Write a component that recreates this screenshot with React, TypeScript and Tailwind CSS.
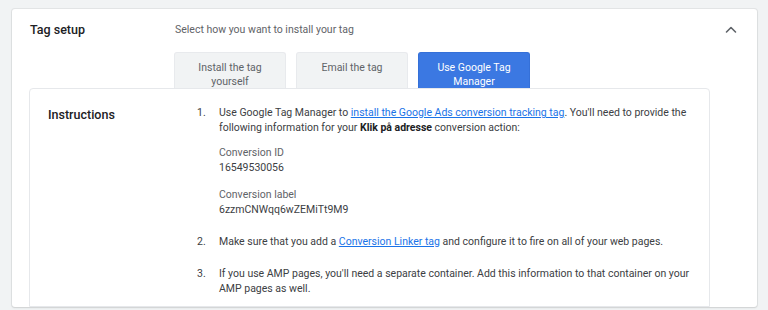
import React from 'react';

const font = { fontFamily: 'Roboto, "Noto Sans", Arial, sans-serif' };

const TABS = [
  { label: 'Install the tag yourself', active: false },
  { label: 'Email the tag', active: false },
  { label: 'Use Google Tag Manager', active: true },
];

const ChevronUp = () => (
  <svg className="w-[14px] h-[14px]" viewBox="0 0 14 14" fill="none" stroke="#5f6368" strokeWidth="1.6" strokeLinecap="round" strokeLinejoin="round">
    <path d="M2.5 9L7 4.5L11.5 9" />
  </svg>
);

const Step: React.FC<{ n: number; className?: string; children: React.ReactNode }> = ({ n, className = '', children }) => (
  <li className={`flex ${className}`}>
    <span className="w-[22px] shrink-0">{n}.</span>
    <div className="flex-1">{children}</div>
  </li>
);

export default function App() {
  return (
    <div className="w-[768px] h-[310px] bg-[#f1f3f4] pt-[9px] pl-[12px] pr-[11px] overflow-hidden" style={font}>
      <div className="bg-white h-[298px] rounded-[3px] shadow-[0_0_0_1px_rgba(60,64,67,0.08),0_1px_2px_rgba(60,64,67,0.12)] flex flex-col">
        {/* header */}
        <div className="flex items-center pt-[11px] pl-[18px] pr-[19px] h-[31px]">
          <div className="w-[145px] text-[12.5px] font-medium text-[#202124] leading-[20px]">Tag setup</div>
          <div className="flex-1 text-[10.5px] text-[#5f6368] leading-[20px]">Select how you want to install your tag</div>
          <ChevronUp />
        </div>

        {/* install options */}
        <div className="flex gap-[10px] pl-[162px] mt-[12px]">
          {TABS.map((t) => (
            <div
              key={t.label}
              className={`w-[112px] h-[36px] rounded-t-[3px] flex justify-center pt-[8px] text-center text-[10.5px] leading-[14px] px-[12px] ${t.active
                ? 'bg-[#3b78e2] text-white border border-[#3570d8] border-b-0'
                : 'bg-[#f1f3f4] text-[#5f6368] border border-[#e8eaed] border-b-0'
                }`}
            >
              {t.label}
            </div>
          ))}
        </div>

        {/* instructions */}
        <div className="ml-[17px] mr-[47px] flex-1 bg-white border border-[#e6e8eb] rounded-t-[4px] flex pt-[16px] pl-[18px]">
          <div className="w-[149px] text-[12.5px] font-medium text-[#202124] leading-[20px]">Instructions</div>
          <ol className="flex-1 pr-[8px] text-[10.5px] leading-[15px] text-[#3c4043]">
            <Step n={1}>
              <p>
                Use Google Tag Manager to{' '}
                <a className="text-[#1a73e8] underline">install the Google Ads conversion tracking tag</a>. You'll need to provide the
                following information for your <b className="font-bold text-[#202124]">Klik på adresse</b> conversion action:
              </p>
              <div className="mt-[10px]">
                <div className="text-[#5f6368]">Conversion ID</div>
                <div>16549530056</div>
              </div>
              <div className="mt-[12px]">
                <div className="text-[#5f6368]">Conversion label</div>
                <div>6zzmCNWqq6wZEMiTt9M9</div>
              </div>
            </Step>
            <Step n={2} className="mt-[17px]">
              <p>
                Make sure that you add a <a className="text-[#1a73e8] underline">Conversion Linker tag</a> and configure it to fire on all of your web pages.
              </p>
            </Step>
            <Step n={3} className="mt-[17px]">
              <p>
                If you use AMP pages, you'll need a separate container. Add this information to that container on your AMP pages as well.
              </p>
            </Step>
          </ol>
        </div>
      </div>
    </div>
  );
}
